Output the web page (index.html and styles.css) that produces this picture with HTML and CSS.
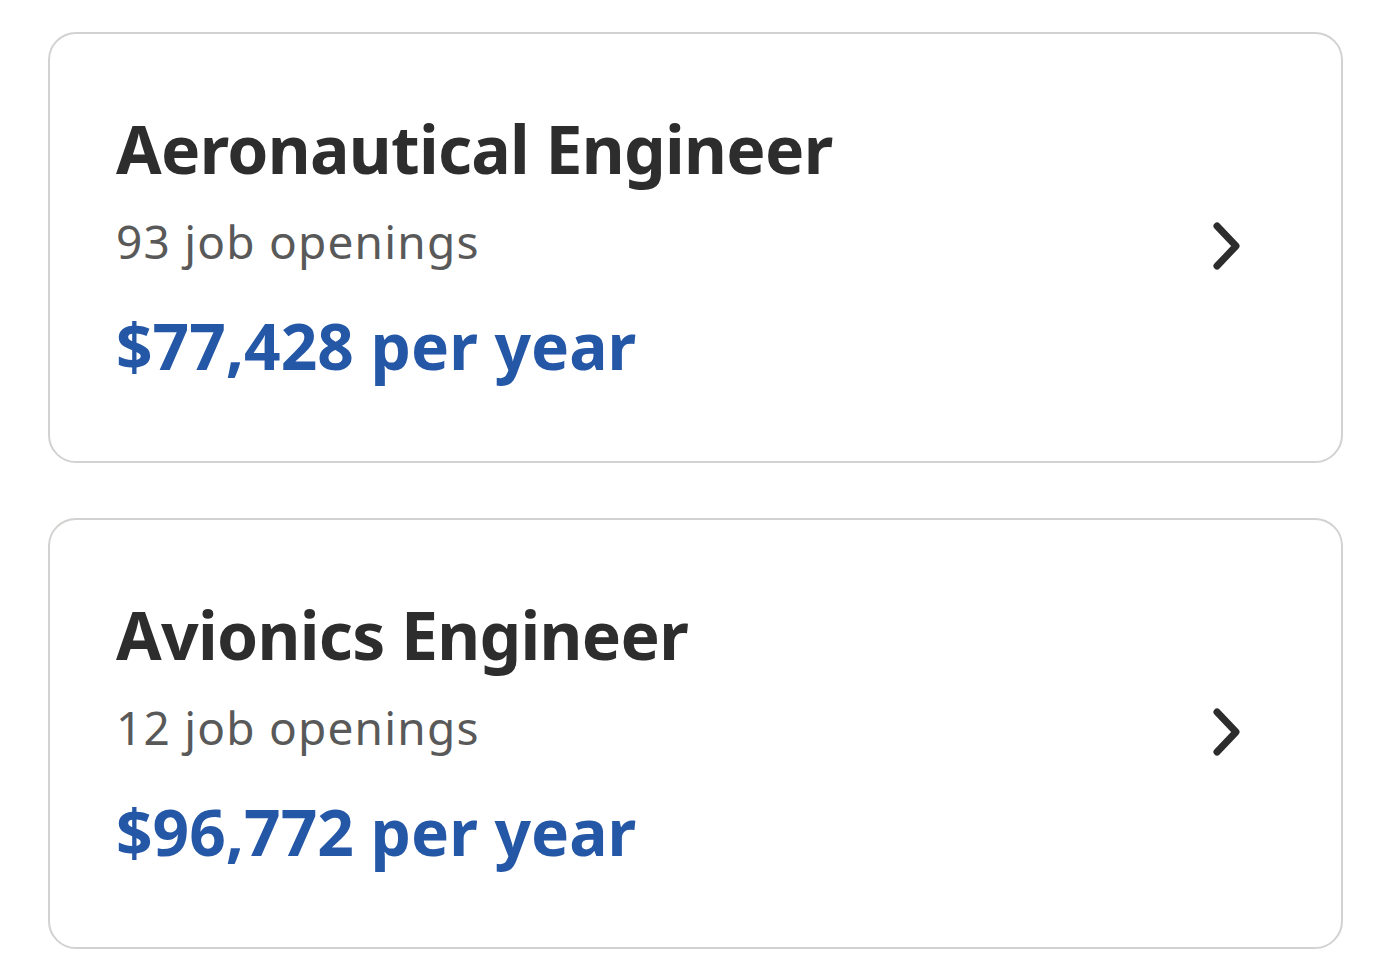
FILE: index.html
```html
<!DOCTYPE html>
<html lang="en">
<head>
<meta charset="utf-8">
<title>Job titles</title>
<link rel="stylesheet" href="styles.css">
</head>
<body>
<div class="list">
  <a class="card" href="#">
    <div class="info">
      <div class="title">Aeronautical Engineer</div>
      <div class="openings">93 job openings</div>
      <div class="salary">$77,428 per year</div>
    </div>
    <svg class="chev" width="32" height="50" viewBox="0 0 32 50" aria-hidden="true"><path d="M6 5 L25 25 L6 45" fill="none" stroke="#2d2d2d" stroke-width="7" stroke-linecap="round" stroke-linejoin="round"/></svg>
  </a>
  <a class="card" href="#">
    <div class="info">
      <div class="title">Avionics Engineer</div>
      <div class="openings">12 job openings</div>
      <div class="salary">$96,772 per year</div>
    </div>
    <svg class="chev" width="32" height="50" viewBox="0 0 32 50" aria-hidden="true"><path d="M6 5 L25 25 L6 45" fill="none" stroke="#2d2d2d" stroke-width="7" stroke-linecap="round" stroke-linejoin="round"/></svg>
  </a>
</div>
</body>
</html>
```
FILE: styles.css
```css
html, body {
  margin: 0;
  padding: 0;
  background: #ffffff;
}
body {
  font-family: "Noto Sans", "Open Sans", "Liberation Sans", sans-serif;
}
.list {
  padding: 32px 0 0 48px;
  width: 1295px;
  display: flex;
  flex-direction: column;
  gap: 55px;
}
.card {
  display: flex;
  align-items: center;
  justify-content: space-between;
  border: 2px solid #d4d2d0;
  border-radius: 28px;
  padding: 71px 98px 75px 66px;
  text-decoration: none;
  color: inherit;
}
.info {
  display: flex;
  flex-direction: column;
}
.title {
  font-size: 66px;
  line-height: 86px;
  font-weight: 700;
  color: #2d2d2d;
  letter-spacing: -0.7px;
}
.openings {
  margin-top: 20px;
  font-size: 46px;
  line-height: 60px;
  color: #595959;
  letter-spacing: 1.2px;
}
.salary {
  margin-top: 35px;
  font-size: 64px;
  line-height: 80px;
  font-weight: 700;
  color: #2557a7;
  letter-spacing: 0;
}
.chev {
  flex: none;
}
```
